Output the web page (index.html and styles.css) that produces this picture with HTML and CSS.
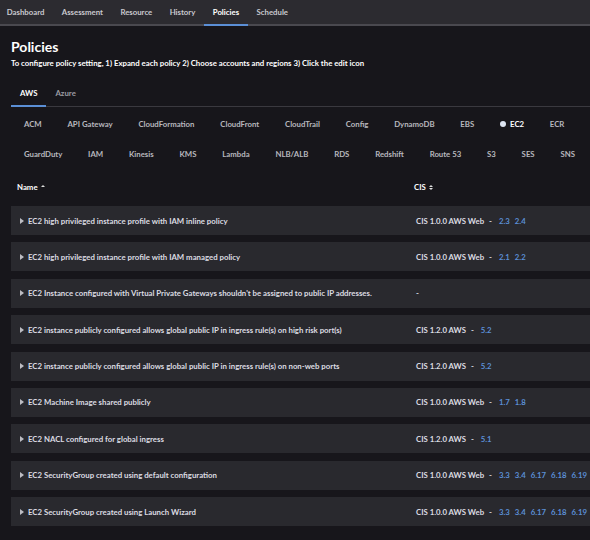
FILE: index.html
```html
<!DOCTYPE html>
<html lang="en">
<head>
  <meta charset="UTF-8">
  <title>Policies</title>
  <link rel="stylesheet" href="styles.css">
</head>
<body>

  <!-- top navigation -->
  <nav class="topnav">
    <a href="#">Dashboard</a>
    <a href="#">Assessment</a>
    <a href="#">Resource</a>
    <a href="#">History</a>
    <a href="#" class="active">Policies</a>
    <a href="#">Schedule</a>
  </nav>

  <div class="content">
    <h1>Policies</h1>
    <p class="hint">To configure policy setting, 1) Expand each policy 2) Choose accounts and regions 3) Click the edit icon</p>

    <!-- cloud tabs -->
    <div class="tabs">
      <span class="tab active">AWS</span>
      <span class="tab">Azure</span>
    </div>

    <!-- service filter -->
    <div class="services">
      <span>ACM</span>
      <span>API Gateway</span>
      <span>CloudFormation</span>
      <span>CloudFront</span>
      <span>CloudTrail</span>
      <span>Config</span>
      <span>DynamoDB</span>
      <span>EBS</span>
      <span class="selected"><i class="dot"></i>EC2</span>
      <span>ECR</span>
      <span>GuardDuty</span>
      <span>IAM</span>
      <span>Kinesis</span>
      <span>KMS</span>
      <span>Lambda</span>
      <span>NLB/ALB</span>
      <span>RDS</span>
      <span>Redshift</span>
      <span>Route 53</span>
      <span>S3</span>
      <span>SES</span>
      <span>SNS</span>
    </div>

    <!-- policy table -->
    <div class="table-head">
      <span>Name <i class="up"></i></span>
      <span>CIS <i class="sort"><b class="up"></b><b class="down"></b></i></span>
    </div>

    <div class="policy">
      <span class="name"><i class="caret"></i>EC2 high privileged instance profile with IAM inline policy</span>
      <span class="cis">CIS 1.0.0 AWS Web <em>-</em> <a href="#">2.3</a><a href="#">2.4</a></span>
    </div>
    <div class="policy">
      <span class="name"><i class="caret"></i>EC2 high privileged instance profile with IAM managed policy</span>
      <span class="cis">CIS 1.0.0 AWS Web <em>-</em> <a href="#">2.1</a><a href="#">2.2</a></span>
    </div>
    <div class="policy">
      <span class="name"><i class="caret"></i>EC2 Instance configured with Virtual Private Gateways shouldn't be assigned to public IP addresses.</span>
      <span class="cis">-</span>
    </div>
    <div class="policy">
      <span class="name"><i class="caret"></i>EC2 instance publicly configured allows global public IP in ingress rule(s) on high risk port(s)</span>
      <span class="cis">CIS 1.2.0 AWS <em>-</em> <a href="#">5.2</a></span>
    </div>
    <div class="policy">
      <span class="name"><i class="caret"></i>EC2 instance publicly configured allows global public IP in ingress rule(s) on non-web ports</span>
      <span class="cis">CIS 1.2.0 AWS <em>-</em> <a href="#">5.2</a></span>
    </div>
    <div class="policy">
      <span class="name"><i class="caret"></i>EC2 Machine Image shared publicly</span>
      <span class="cis">CIS 1.0.0 AWS Web <em>-</em> <a href="#">1.7</a><a href="#">1.8</a></span>
    </div>
    <div class="policy">
      <span class="name"><i class="caret"></i>EC2 NACL configured for global ingress</span>
      <span class="cis">CIS 1.2.0 AWS <em>-</em> <a href="#">5.1</a></span>
    </div>
    <div class="policy">
      <span class="name"><i class="caret"></i>EC2 SecurityGroup created using default configuration</span>
      <span class="cis">CIS 1.0.0 AWS Web <em>-</em> <a href="#">3.3</a><a href="#">3.4</a><a href="#">6.17</a><a href="#">6.18</a><a href="#">6.19</a></span>
    </div>
    <div class="policy">
      <span class="name"><i class="caret"></i>EC2 SecurityGroup created using Launch Wizard</span>
      <span class="cis">CIS 1.0.0 AWS Web <em>-</em> <a href="#">3.3</a><a href="#">3.4</a><a href="#">6.17</a><a href="#">6.18</a><a href="#">6.19</a></span>
    </div>
  </div>

</body>
</html>
```

FILE: styles.css
```css
/* ===== base ===== */
body {
  margin: 0;
  background: #17161b;
  color: #e6e6ea;
  font-family: Lato, "Liberation Sans", sans-serif;
  font-weight: 700;
  overflow: hidden;
}

/* ===== top navigation ===== */
.topnav {
  display: flex;
  height: 24px;
  background: #2c2b30;
  border-bottom: 2px solid #4a494f;
  margin-left: -2px;
}
.topnav a {
  display: flex;
  align-items: center;
  padding: 0 8.7px;
  font-size: 7.8px;
  color: #c9c9cf;
  text-decoration: none;
  border-bottom: 2px solid transparent;
  margin-bottom: -2px;
}
.topnav a.active {
  color: #fff;
  border-bottom-color: #5b8fd6;
}

/* ===== page header ===== */
.content {
  padding-left: 11px;
}
h1 {
  margin: 12px 0 0;
  font-size: 14px;
  line-height: 18px;
  color: #fff;
}
.hint {
  margin: 0;
  font-size: 7.8px;
  line-height: 14px;
  color: #fff;
}

/* AWS / Azure */
.tabs {
  display: flex;
  margin-top: 16px;
  border-bottom: 1px solid #3a393f;
}
.tab {
  padding: 0 9px;
  height: 19px;
  line-height: 15px;
  font-size: 7.8px;
  color: #9c9ca3;
  border-bottom: 2px solid transparent;
  margin-bottom: -1px;
}
.tab.active {
  color: #fff;
  border-bottom-color: #5b8fd6;
}

/* service filter */
.services {
  display: flex;
  flex-wrap: wrap;
  margin-top: 2px;
  margin-right: -20px;
}
.services span {
  display: flex;
  align-items: center;
  padding: 0 12.9px;
  height: 30px;
  font-size: 7.8px;
  color: #b8b8be;
}
.services .selected {
  color: #fff;
}
.dot {
  width: 6px;
  height: 6px;
  border-radius: 50%;
  background: #dde4f2;
  margin-right: 4px;
}

/* ===== table ===== */
.table-head {
  display: grid;
  grid-template-columns: 403px 1fr;
  height: 30px;
  align-items: center;
  margin-top: 3px;
  font-size: 7.8px;
  color: #fff;
}
.table-head span {
  display: flex;
  align-items: center;
  gap: 3px;
  padding-left: 6px;
}
.table-head span:last-child {
  padding-left: 0;
}
.up, .down {
  display: block;
  width: 0;
  height: 0;
  border-left: 2px solid transparent;
  border-right: 2px solid transparent;
}
.up {
  border-bottom: 2px solid #ddd;
}
.down {
  border-top: 2px solid #ddd;
  margin-top: 1px;
}
.table-head > span > .up {
  margin-top: -3px;
}
.sort {
  display: flex;
  flex-direction: column;
}

.policy {
  display: grid;
  grid-template-columns: 405px 1fr;
  align-items: center;
  height: 29px;
  margin-top: 7.4px;
  margin-right: -20px;
  background: #29292e;
  font-size: 7.8px;
  color: #dcdce2;
}
.table-head + .policy {
  margin-top: 4px;
}
.name {
  display: flex;
  align-items: center;
  padding-left: 9px;
  white-space: nowrap;
}
.caret {
  width: 0;
  height: 0;
  border-top: 3px solid transparent;
  border-bottom: 3px solid transparent;
  border-left: 4px solid #bdbdc3;
  margin-right: 4px;
}
.cis {
  white-space: nowrap;
  color: #dcdce2;
}
.cis em {
  font-style: normal;
  margin: 0 5px 0 3px;
}
.cis a {
  color: #5b8fd6;
  text-decoration: none;
  margin-right: 5px;
}
```
